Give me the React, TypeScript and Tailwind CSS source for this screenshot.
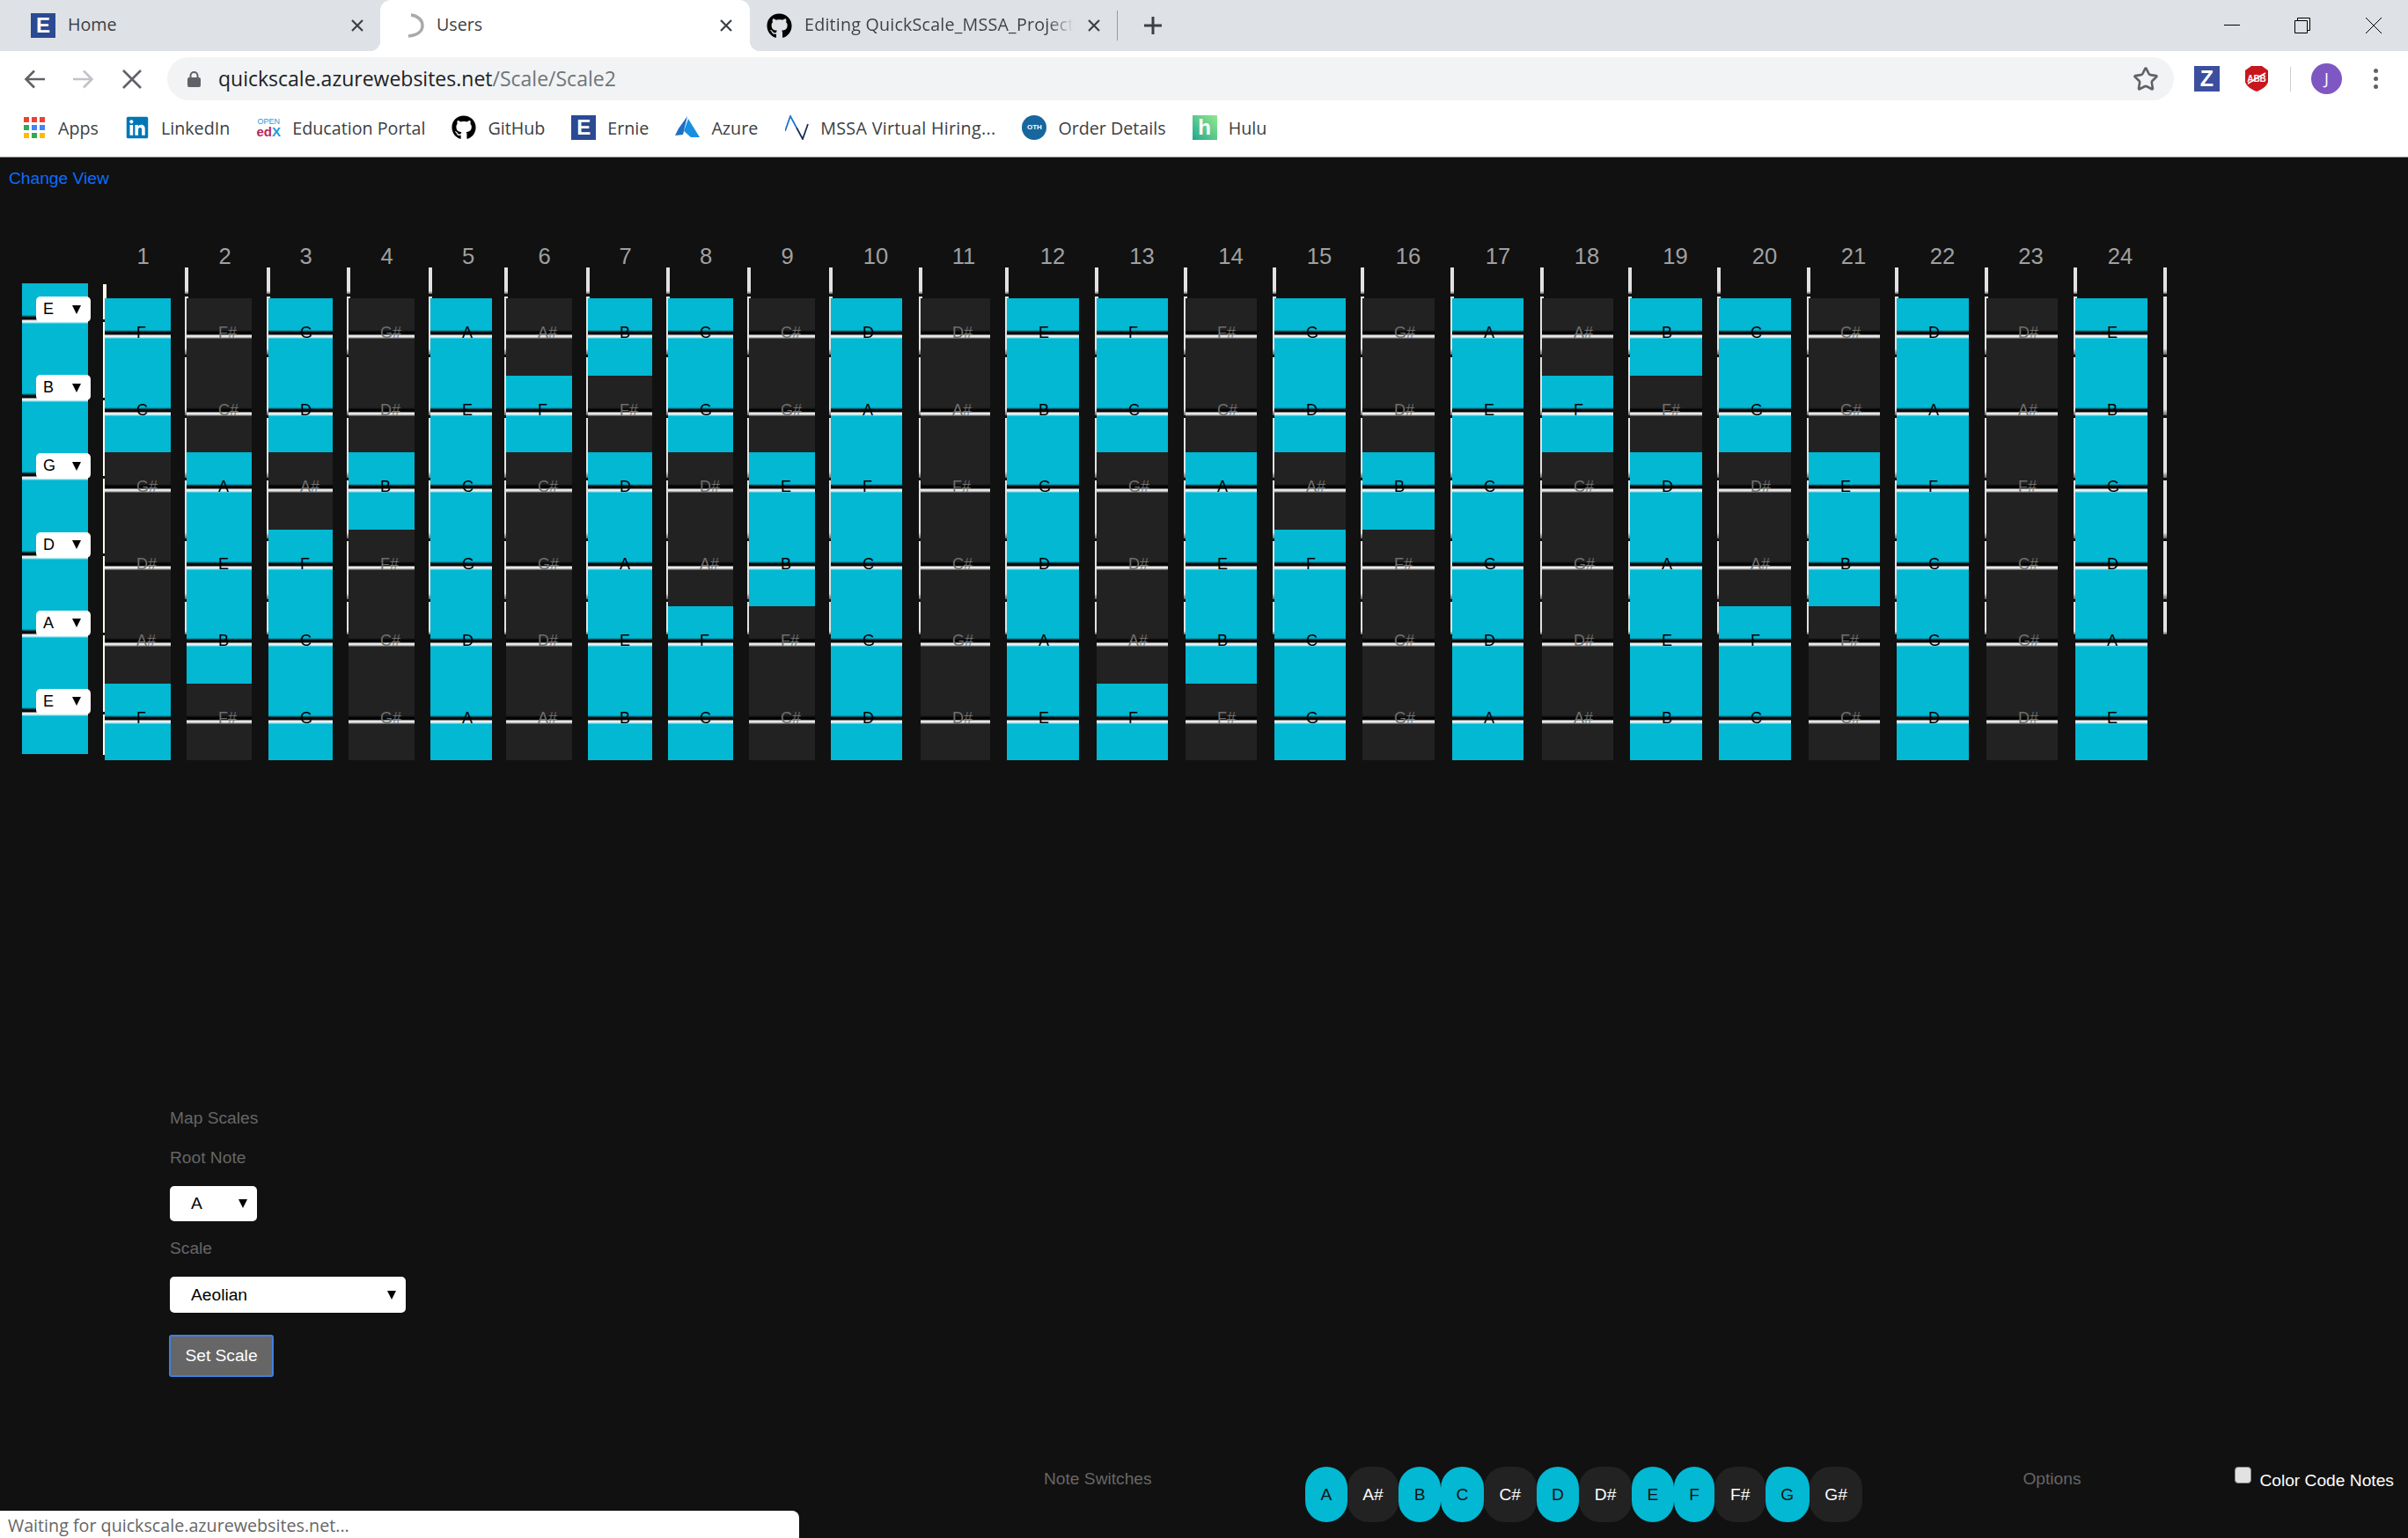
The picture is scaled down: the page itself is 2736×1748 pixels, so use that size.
import { Star } from 'lucide-react'
import { FaGithub, FaLinkedin } from 'react-icons/fa'

const CHROMATIC = ['A', 'A#', 'B', 'C', 'C#', 'D', 'D#', 'E', 'F', 'F#', 'G', 'G#']
const STRINGS = [7, 2, 10, 5, 0, 7]
const TUNING = ['E', 'B', 'G', 'D', 'A', 'E']

// slot = distance to the next fret, cell = width of the coloured column
const FRETS = [
  [93, 75], [93, 74], [91, 73], [93, 75], [86, 70], [93, 75], [91, 73], [92, 74],
  [93, 75], [102, 81], [98, 79], [102, 82], [101, 81], [101, 81], [100, 81], [102, 82],
  [102, 81], [100, 81], [101, 82], [102, 82], [100, 81], [102, 82], [101, 81], [102, 82],
]

const BAR_SEGMENTS = [30, 66, 66, 68, 66, 66, 37]
const NUT_SEGMENTS = [40, 86, 86, 85, 87, 87, 46]

function FretBar() {
  return (
    <div className="absolute left-[-2px] top-[28px] flex w-[4px] flex-col gap-[3px]">
      {BAR_SEGMENTS.map((h, i) => (
        <div
          key={i}
          className="bg-linear-to-b from-[#e2e2e2] from-90% to-[#666]"
          style={{ height: h }}
        />
      ))}
    </div>
  )
}

function Nut() {
  return (
    <div className="absolute left-[-2px] top-[47px] flex w-[4px] flex-col gap-[3px]">
      {NUT_SEGMENTS.map((h, i) => (
        <div key={i} className="bg-[#fffbe8]" style={{ height: h }} />
      ))}
    </div>
  )
}

function StringLine({ className }: { className: string }) {
  return (
    <div
      className={`absolute left-0 right-0 h-[10px] bg-[linear-gradient(to_bottom,rgba(0,0,0,0)_0%,rgba(0,0,0,0.9)_25%,rgba(0,0,0,1)_50%,rgba(200,200,200,1)_58%,rgba(255,255,255,1)_70%,rgba(255,255,255,0.55)_90%,rgba(255,255,255,0)_100%)] ${className}`}
    />
  )
}

function Arrow() {
  return (
    <svg width="10" height="10" viewBox="0 0 10 10" className="shrink-0">
      <polygon points="0,0 10,0 5,10" fill="#000" />
    </svg>
  )
}

function FretColumn({ fret, slot, cell }: { fret: number; slot: number; cell: number }) {
  return (
    <div className="relative shrink-0" style={{ width: slot }}>
      {fret === 1 ? <Nut /> : <FretBar />}
      <div
        className="h-[30px] text-center text-[25.6px] leading-[30px] text-[#a0a0a0]"
        style={{
          paddingRight: fret < 10 && fret !== 5 ? 6 : 0,
          paddingLeft: fret >= 12 && fret <= 22 ? 2 : 0,
        }}
      >
        {fret}
      </div>
      <div className="mt-[33px] flex flex-col" style={{ width: cell }}>
        {STRINGS.map((base, i) => {
          const note = CHROMATIC[(base + fret) % 12]
          const on = note.length === 1
          return (
            <div
              key={i}
              className={`relative h-[87.5px] pl-[36px] pt-[29px] text-[18px] leading-[20px] ${
                on ? 'bg-[#02b8d3] text-black' : 'bg-[#222] text-[#6e6e6e]'
              }`}
            >
              <StringLine className="top-[36px]" />
              <span className="relative">{note}</span>
            </div>
          )
        })}
      </div>
    </div>
  )
}

function Fretboard() {
  return (
    <div className="mt-[61px] flex h-[588px] items-start">
      <div className="ml-[25px] mt-[46px] w-[75px] bg-[#02b8d3]">
        {TUNING.map((t, i) => (
          <div key={i} className="relative h-[89.2px]">
            <StringLine className="top-[36px]" />
            <div className="relative ml-[16px] flex h-[29px] w-[62px] translate-y-[15px] items-center justify-between rounded-[5px] bg-white pl-[8px] pr-[11px] text-[18px] text-black">
              {t}
              <Arrow />
            </div>
          </div>
        ))}
      </div>
      <div className="ml-[19px] flex items-start">
        {FRETS.map(([slot, cell], i) => (
          <FretColumn key={i} fret={i + 1} slot={slot} cell={cell} />
        ))}
        <div className="relative w-0 shrink-0">
          <FretBar />
        </div>
      </div>
    </div>
  )
}

function ScalePanel() {
  return (
    <div className="ml-[193px] mt-[395px] flex flex-col items-start text-[19.2px] leading-[24px] text-[#666]">
      <div>Map Scales</div>
      <div className="mt-[21px]">Root Note</div>
      <div className="mt-[20px] flex h-[40px] w-[99px] items-center justify-between rounded-[5px] bg-white pl-[24px] pr-[11px] text-black">
        A
        <Arrow />
      </div>
      <div className="mt-[19px]">Scale</div>
      <div className="mt-[20px] flex h-[41px] w-[268px] items-center justify-between rounded-[5px] bg-white pl-[24px] pr-[11px] text-black">
        Aeolian
        <Arrow />
      </div>
      <button className="ml-[-1px] mt-[25px] h-[48px] w-[119px] rounded-[3px] border-2 border-[#3f7fe0] bg-[#666] text-white">
        Set Scale
      </button>
    </div>
  )
}

function BottomRow() {
  return (
    <div className="mt-[102px] flex items-start pl-[1186px] text-[19.2px] leading-[24px]">
      <div className="mt-[2px] w-[297px] text-[#666]">Note Switches</div>
      <div className="flex">
        {CHROMATIC.map((n) => (
          <div
            key={n}
            className={`flex h-[63px] items-center rounded-[24px] px-[17.5px] ${
              n.length === 1 ? 'bg-[#02b8d3] text-[#111]' : 'bg-[#222] text-white'
            }`}
          >
            {n}
          </div>
        ))}
      </div>
      <div className="ml-[182px] mt-[2px] w-[241px] text-[#666]">Options</div>
      <div className="h-[19px] w-[19px] rounded-[4px] border border-[#888] bg-[#e2e2e2]" />
      <div className="ml-[9px] mt-[4px] text-white">Color Code Notes</div>
    </div>
  )
}

function Glyph({ className, children }: { className: string; children: string }) {
  return (
    <div className={`flex shrink-0 items-center justify-center font-['Liberation_Sans',sans-serif] font-bold ${className}`}>
      {children}
    </div>
  )
}

function ELogo() {
  return <Glyph className="h-[28px] w-[28px] bg-[#2a4a94] text-[24px] text-white">E</Glyph>
}

function CloseX() {
  return (
    <svg width="14" height="14" viewBox="0 0 14 14" className="shrink-0" stroke="#3c4043" strokeWidth="2.2">
      <path d="M1 1 13 13M13 1 1 13" />
    </svg>
  )
}

function Tab({ active, icon, label, close, width }: { active?: boolean; icon: React.ReactNode; label: string; close: string; width: string }) {
  return (
    <div className={`relative flex h-[58px] shrink-0 items-center ${width} ${active ? 'rounded-t-[12px] bg-white' : ''}`}>
      {active && (
        <>
          <div className="absolute bottom-0 left-[-12px] h-[12px] w-[12px] bg-[radial-gradient(circle_at_0_0,#dee1e6_12px,#fff_12.5px)]" />
          <div className="absolute bottom-0 right-[-12px] h-[12px] w-[12px] bg-[radial-gradient(circle_at_100%_0,#dee1e6_12px,#fff_12.5px)]" />
        </>
      )}
      {icon}
      <div className="ml-[14px] min-w-0 flex-1 overflow-hidden whitespace-nowrap pb-[2px] text-[#3c4043]">{label}</div>
      <div className={close}>
        <CloseX />
      </div>
    </div>
  )
}

function TitleBar() {
  return (
    <div className="flex h-[58px] items-center bg-[#dee1e6] text-[19.7px]">
      <Tab
        width="w-[432px] pl-[35px]"
        icon={<ELogo />}
        label="Home"
        close="mr-[19px]"
      />
      <Tab
        active
        width="w-[420px] pl-[30px]"
        icon={
          <svg width="20" height="28" viewBox="0 0 20 28" className="shrink-0" fill="none" stroke="#aaa" strokeWidth="3.5">
            <path d="M5 2C13 3 18 8 18 14 18 20 13 25 2 26" />
          </svg>
        }
        label="Users"
        close="mr-[20px]"
      />
      <div className="relative flex h-[58px] w-[418px] shrink-0 items-center pl-[19px]">
        <FaGithub size={29} color="#000" className="shrink-0" />
        <div className="ml-[14px] w-[306px] overflow-hidden whitespace-nowrap bg-linear-to-r from-[#3c4043] from-90% to-[#dee1e6] bg-clip-text pb-[2px] tracking-[0.2px] text-transparent">
          Editing QuickScale_MSSA_Project
        </div>
        <div className="ml-[16px]">
          <CloseX />
        </div>
        <div className="ml-[19px] h-[34px] w-[1px] bg-[#999]" />
      </div>
      <svg width="22" height="22" viewBox="0 0 22 22" className="ml-[29px]" stroke="#3c4043" strokeWidth="3">
        <path d="M11 1V21M1 11H21" />
      </svg>
      <div className="ml-auto flex items-center pr-[30px]" >
        <svg width="18" height="18" viewBox="0 0 18 18" stroke="#000" strokeWidth="1" fill="none">
          <path d="M0 8.5H18" />
        </svg>
        <svg width="18" height="18" viewBox="0 0 18 18" className="ml-[62px]" stroke="#000" strokeWidth="1" fill="none">
          <path d="M.5 3.5H14.5V17.5H.5ZM3.5 3.5V.5H17.5V14.5H14.5" />
        </svg>
        <svg width="18" height="18" viewBox="0 0 18 18" className="ml-[63px]" stroke="#000" strokeWidth="1" fill="none">
          <path d="M0 0 18 18M18 0 0 18" />
        </svg>
      </div>
    </div>
  )
}

function Toolbar() {
  return (
    <div className="flex h-[58px] items-center bg-white pt-[5px]">
      <svg width="24" height="22" viewBox="0 0 24 22" className="ml-[27px]" fill="none" stroke="#5f6368" strokeWidth="2.6">
        <path d="M24 11H3M12 1.5 2.5 11 12 20.5" />
      </svg>
      <svg width="24" height="22" viewBox="0 0 24 22" className="ml-[32px]" fill="none" stroke="#c0c3c7" strokeWidth="2.6">
        <path d="M0 11H21M12 1.5 21.5 11 12 20.5" />
      </svg>
      <svg width="22" height="22" viewBox="0 0 22 22" className="ml-[32px]" fill="none" stroke="#5f6368" strokeWidth="2.6">
        <path d="M1 1 21 21M21 1 1 21" />
      </svg>
      <div className="ml-[29px] flex h-[49px] w-[2280px] items-center rounded-full bg-[#f1f3f4] pl-[23px] pr-[17px]">
        <svg width="15" height="18" viewBox="0 0 15 18" fill="#5f6368">
          <path d="M2 7h11a2 2 0 0 1 2 2v7a2 2 0 0 1-2 2H2a2 2 0 0 1-2-2V9a2 2 0 0 1 2-2Z" />
          <path d="M3.5 8V5a4 4 0 0 1 8 0v3" fill="none" stroke="#5f6368" strokeWidth="2" />
        </svg>
        <div className="ml-[20px] text-[23px] text-[#202124]">
          quickscale.azurewebsites.net<span className="text-[#70757a]">/Scale/Scale2</span>
        </div>
        <Star size={30} strokeWidth={2.1} color="#5f6368" className="ml-auto" />
      </div>
      <Glyph className="ml-[23px] h-[29px] w-[29px] bg-[#3b4f9e] text-[25px] text-white">Z</Glyph>
      <div className="relative ml-[29px] flex h-[29px] w-[26px] items-center justify-center">
        <svg width="26" height="29" viewBox="0 0 26 29" className="absolute inset-0">
          <path d="M7 0H19L26 5V18C25 23 18 27 13 29 8 27 1 23 0 18V5Z" fill="#c8161d" />
          <path d="M3 20 23 8" stroke="#fff" strokeWidth="1.6" />
        </svg>
        <span className="relative font-['Liberation_Sans',sans-serif] text-[10px] font-bold text-white">ABB</span>
      </div>
      <div className="ml-[25px] h-[28px] w-[1px] bg-[#ccc]" />
      <div className="ml-[23px] flex h-[35px] w-[35px] items-center justify-center rounded-full bg-[#7e57c2] text-[18px] text-white">
        J
      </div>
      <div className="ml-[36px] flex flex-col gap-[4px]">
        <div className="h-[5px] w-[5px] rounded-full bg-[#5f6368]" />
        <div className="h-[5px] w-[5px] rounded-full bg-[#5f6368]" />
        <div className="h-[5px] w-[5px] rounded-full bg-[#5f6368]" />
      </div>
    </div>
  )
}

function Bookmark({ icon, label, wide }: { icon: React.ReactNode; label: string; wide?: boolean }) {
  return (
    <div className="flex items-center gap-[13px]">
      <div className="flex w-[28px] shrink-0 justify-center">{icon}</div>
      <span className={`whitespace-nowrap text-[#3c4043] ${wide ? 'tracking-[0.3px]' : ''}`}>{label}</span>
    </div>
  )
}

const APP_DOTS = [
  '#ea4335', '#ea4335', '#ea4335',
  '#34a853', '#4285f4', '#4285f4',
  '#fbbc04', '#34a853', '#fbbc04',
]

function Bookmarks() {
  return (
    <div className="flex h-[63px] items-center gap-[30px] border-b border-[#999] bg-white pb-[3px] pl-[25px] text-[19.7px]">
      <Bookmark
        label="Apps"
        icon={
          <div className="grid h-[24px] w-[24px] grid-cols-3 gap-[3px]">
            {APP_DOTS.map((c, i) => (
              <div key={i} className="h-[6px] w-[6px]" style={{ background: c }} />
            ))}
          </div>
        }
      />
      <Bookmark label="LinkedIn" icon={<FaLinkedin size={28} color="#0077b5" />} />
      <Bookmark
        label="Education Portal"
        icon={
          <div className="flex h-[24px] w-[28px] flex-col items-center font-['Liberation_Sans',sans-serif]">
            <span className="text-[9px] leading-[10px] text-[#1e9bd7]">OPEN</span>
            <span className="text-[15px] font-bold leading-[14px] text-[#b5275f]">
              ed<span className="text-[#1e9bd7]">X</span>
            </span>
          </div>
        }
      />
      <Bookmark label="GitHub" icon={<FaGithub size={28} color="#000" />} />
      <Bookmark label="Ernie" icon={<ELogo />} />
      <Bookmark
        label="Azure"
        icon={
          <svg width="28" height="26" viewBox="0 0 28 26">
            <path d="M14 0 4 14 0 22 9 21Z" fill="#1f6fc4" />
            <path d="M15 3 10 17 18 24 0 24H28Z" fill="#1a8fe0" />
          </svg>
        }
      />
      <Bookmark
        wide
        label="MSSA Virtual Hiring..."
        icon={
          <svg width="27" height="28" viewBox="0 0 27 28" fill="none" strokeWidth="1.8">
            <path d="M0 18 6 1 13 14" stroke="#2277cc" />
            <path d="M13 14 20 27 26 10" stroke="#1b2f55" />
          </svg>
        }
      />
      <Bookmark
        label="Order Details"
        icon={
          <div className="flex h-[28px] w-[28px] items-center justify-center rounded-full bg-[#17679e] font-['Liberation_Sans',sans-serif] text-[8px] font-bold text-white">
            OTH
          </div>
        }
      />
      <Bookmark
        label="Hulu"
        icon={
          <Glyph className="h-[28px] w-[28px] bg-linear-to-tr from-[#13a88a] to-[#8fe98c] text-[24px] text-white">h</Glyph>
        }
      />
    </div>
  )
}

export default function App() {
  return (
    <div className="relative h-[1748px] overflow-hidden bg-[#111] font-['Liberation_Sans',Arial,sans-serif]">
      <div className="font-['Open_Sans',sans-serif]">
        <TitleBar />
        <Toolbar />
        <Bookmarks />
      </div>
      <div className="pl-[10px] pt-[12px] text-[19.2px] leading-[24px] text-[#0a6cff]">Change View</div>
      <Fretboard />
      <ScalePanel />
      <BottomRow />
      {/* Loading bubble sits over the page */}
      <div className="absolute bottom-0 left-0 flex h-[31px] w-[908px] items-center rounded-tr-[8px] bg-white pl-[9px] pt-[3px] font-['Open_Sans',sans-serif] text-[19.7px] text-[#666]">
        Waiting for quickscale.azurewebsites.net...
      </div>
    </div>
  )
}
